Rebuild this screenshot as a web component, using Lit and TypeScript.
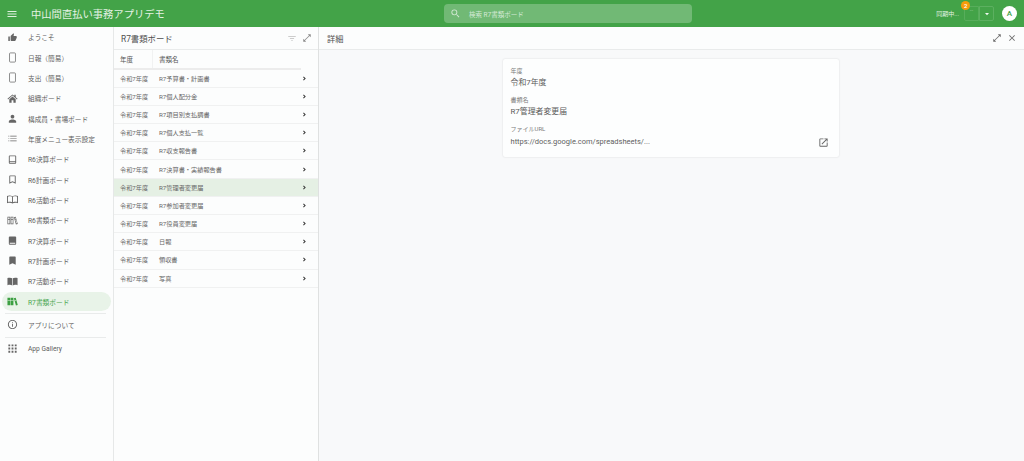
import { LitElement, html, css, svg } from "lit";
import { customElement } from "lit/decorators.js";

const I: Record<string, any> = {
  thumb: svg`<g transform="translate(2 2) scale(.84)"><path d="M1 21h4V9H1v12zm22-11c0-1.100-.9-2-2-2h-6.310l.95-4.570.03-.32c0-.41-.17-.79-.44-1.060L14.170 1 7.590 7.590C7.220 7.950 7 8.450 7 9v10c0 1.100.9 2 2 2h9c.83 0 1.540-.5 1.840-1.220l3.020-7.050c.09-.23.14-.47.14-.73v-2z"/></g>`,
  phone: svg`<rect x="5.500" y="2" width="13" height="20" rx="2" fill="none" stroke="currentColor" stroke-width="1.600"/>`,
  home: svg`<path d="M12 3 1 12.500l1.300 1.500L12 5.700 21.700 14l1.300-1.500L19 9V4h-3v2.500zM12 7.500 5 13.500V21h5v-5h4v5h5v-7.500z"/>`,
  person: svg`<path d="M12 12c2.210 0 4-1.790 4-4s-1.790-4-4-4-4 1.790-4 4 1.790 4 4 4zm0 2c-2.670 0-8 1.340-8 4v3h16v-3c0-2.660-5.330-4-8-4z"/>`,
  list: svg`<path d="M3 6h2v1.600H3zm4 0h14v1.600H7zM3 11.200h2v1.600H3zm4 0h14v1.600H7zM3 16.400h2V18H3zm4 0h14V18H7z"/>`,
  bookO: svg`<path d="M6 3h12a2 2 0 0 1 2 2v14a2 2 0 0 1-2 2H6a2 2 0 0 1-2-2V5a2 2 0 0 1 2-2zm0 2v10h12V5zm0 12v2h12v-2z"/>`,
  markO: svg`<path d="M17 3H7c-1.100 0-2 .9-2 2v16l7-3 7 3V5c0-1.100-.9-2-2-2zm0 15-5-2.180L7 18V5h10v13z"/>`,
  openO: svg`<path d="M0 4.500C3 3 9 3 12 5c3-2 9-2 12-.5V20c-3-1-9-1.500-12 .5-3-2-9-1.500-12-.5zM2 6v11.500c3-.7 6-.6 9 .6V6.200C8 4.800 5 4.800 2 6zm11 .2v11.900c3-1.200 6-1.300 9-.6V6c-3-1.200-6-1.200-9 .2z"/>`,
  libO: svg`<path d="M1 4h6v16H1zm1.500 1.500v3h3v-3zm0 5v8h3v-8zM8 4h6v16H8zm1.500 1.500v3h3v-3zm0 5v8h3v-8zM15 5l4-1 4.500 15.500-4 1.200zm1.800 1.200 .7 2.500 1.500-.4-.7-2.500zm1.300 4 2.300 8 1.500-.4-2.300-8z"/>`,
  book: svg`<path d="M6 3h12a2 2 0 0 1 2 2v14a2 2 0 0 1-2 2H6a2 2 0 0 1-2-2V5a2 2 0 0 1 2-2zm0 14v2h12v-2z"/>`,
  mark: svg`<path d="M17 3H7c-1.100 0-2 .9-2 2v16l7-3 7 3V5c0-1.100-.9-2-2-2z"/>`,
  open: svg`<path d="M1 4.500C4 3.500 9 3 11.300 5v15.500c-2.500-2-7-1.500-10.300-.5zM12.700 5c2.300-2 7.300-1.500 10.300-.5V20c-3-1-7.800-1.500-10.300.5z"/>`,
  lib: svg`<path d="M1 4h6v16H1zM8 4h6v16H8zM15 5l4-1 4.500 15.500-4 1.200z"/><path d="M1 9h13v1.400H1zM16 10.200l4-1.100.4 1.300-4 1.100z" fill="#e8f3e8"/>`,
  info: svg`<path d="M11 7h2v2h-2zm0 4h2v6h-2zm1-9C6.480 2 2 6.480 2 12s4.480 10 10 10 10-4.480 10-10S17.520 2 12 2zm0 18c-4.410 0-8-3.590-8-8s3.590-8 8-8 8 3.590 8 8-3.590 8-8 8z"/>`,
  apps: svg`<path d="M3 3h4v4H3zm7 0h4v4h-4zm7 0h4v4h-4zM3 10h4v4H3zm7 0h4v4h-4zm7 0h4v4h-4zM3 17h4v4H3zm7 0h4v4h-4zm7 0h4v4h-4z"/>`,
  menu: svg`<path d="M3 18h18v-2H3v2zm0-5h18v-2H3v2zm0-7v2h18V6H3z"/>`,
  search: svg`<path d="M15.500 14h-.79l-.28-.27A6.470 6.470 0 0 0 16 9.500 6.500 6.500 0 1 0 9.500 16c1.610 0 3.090-.59 4.230-1.570l.27.28v.79l5 4.990L20.490 19l-4.990-5zm-6 0C7.010 14 5 11.990 5 9.500S7.010 5 9.500 5 14 7.010 14 9.500 11.990 14 9.500 14z"/>`,
  filter: svg`<path d="M3 7h18v1.800H3zm4 5h10v1.800H7zm3.500 5h3v1.800h-3z"/>`,
  expand: svg`<path d="M21 3h-7l2.800 2.800L5.800 16.800 3 14v7h7l-2.800-2.800 11-11L21 10z"/>`,
  close: svg`<path d="M19 6.410 17.590 5 12 10.590 6.410 5 5 6.410 10.590 12 5 17.590 6.410 19 12 13.410 17.590 19 19 17.590 13.410 12z"/>`,
  chev: svg`<path d="M9.500 5 7 7.500l4.500 4.500L7 16.500 9.500 19l7-7z"/>`,
  ext: svg`<path d="M19 19H5V5h7V3H5a2 2 0 0 0-2 2v14a2 2 0 0 0 2 2h14a2 2 0 0 0 2-2v-7h-2v7zM14 3v2h3.590l-9.830 9.830 1.410 1.410L19 6.410V10h2V3h-7z"/>`,
  caret: svg`<path d="M6 9h12l-6 7z"/>`,
};

const ico = (n: string) => html`<svg viewBox="0 0 24 24" fill="currentColor">${I[n]}</svg>`;

const NAV: [string, string][] = [
  ["thumb", "ようこそ"], ["phone", "日報（簡易）"], ["phone", "支出（簡易）"], ["home", "組織ボード"],
  ["person", "構成員・書場ボード"], ["list", "年度メニュー表示設定"], ["bookO", "R6決算ボード"], ["markO", "R6計画ボード"],
  ["openO", "R6活動ボード"], ["libO", "R6書類ボード"], ["book", "R7決算ボード"], ["mark", "R7計画ボード"],
  ["open", "R7活動ボード"], ["lib", "R7書類ボード"],
];
const ROWS = ["R7予算書・計画書", "R7個人配分金", "R7項目別支払調書", "R7個人支払一覧", "R7収支報告書", "R7決算書・実績報告書",
  "R7管理者変更届", "R7参加者変更届", "R7役員変更届", "日報", "領収書", "写真"];

@customElement("app-root")
export class AppRoot extends LitElement {
  static styles = css`
    :host { display: block; width: 1024px; height: 461px; overflow: hidden; background: #fcfdfd; color: #5b5b5b;
      font-family: Roboto, "Noto Sans CJK JP", sans-serif; }
    svg { display: block; }
    .app { display: flex; flex-direction: column; height: 461px; }
    .top { flex: 0 0 27px; background: #43a348; color: #fff; display: flex; align-items: center; position: relative; }
    .burger { width: 12px; height: 12px; margin-left: 6px; color: #dff0df; }
    .title { margin-left: 13px; font-size: 10.300px; color: #e4f2e4; white-space: nowrap; }
    .search { position: absolute; left: 444px; top: 4px; width: 248px; height: 19px; border-radius: 4px; background: #71b975;
      display: flex; align-items: center; color: #d4e9d5; font-size: 6.500px; }
    .search svg { width: 11px; height: 11px; margin: 0 8px 0 6px; }
    .right { margin-left: auto; display: flex; align-items: center; position: relative; }
    .sync { font-size: 6px; color: #e4f2e4; margin-right: 5px; white-space: nowrap; }
    .ghost { width: 15px; height: 15px; border: 1px solid #57ad5b; border-radius: 2px 0 0 2px; box-sizing: border-box;
      color: #8fc892; font-size: 6px; line-height: 6px; text-align: center; }
    .drop { width: 15px; height: 15px; border: 1px solid #5cb060; border-radius: 0 2px 2px 0; box-sizing: border-box;
      display: flex; align-items: center; justify-content: center; margin-right: 8px; color: #f1f8f1; }
    .drop svg { width: 8px; height: 8px; }
    .badge { position: absolute; left: 25px; top: -5px; width: 9px; height: 9px; border-radius: 50%; background: #f59c0a; color: #fff;
      font-size: 6px; font-weight: 500; display: flex; align-items: center; justify-content: center; }
    .avatar { width: 15px; height: 15px; border-radius: 50%; background: #fff; color: #43a348; font-size: 8px; font-weight: 500;
      display: flex; align-items: center; justify-content: center; margin-right: 7px; }
    .body { flex: 1; display: flex; min-height: 0; }
    .nav { flex: 0 0 113px; border-right: 1px solid #e6e8e8; }
    .nitem { height: 20.350px; display: flex; align-items: center; font-size: 6.700px; color: #5e5e5e; white-space: nowrap; margin: 0 2px; border-radius: 10px; }
    .nitem svg { width: 11px; height: 11px; margin: 0 10px 0 5px; flex: none; color: #666; }
    .nitem.on { background: #e8f3e8; color: #4ba650; height: 19px; margin-top: 1px; }
    .nitem.on svg { color: #3c9f42; }
    .sep { height: 1px; background: #e9ebeb; margin: 2px 7px 0 5px; }
    .nitem.low { height: 21px; }
    .list { flex: 0 0 204px; border-right: 1px solid #dfe1e1; display: flex; flex-direction: column; }
    .phead { height: 23px; flex: none; border-bottom: 1px solid #e9ebeb; box-sizing: border-box; display: flex; align-items: center;
      font-size: 8.400px; color: #4f4f4f; padding: 0 6px 0 7px; }
    .phead .acts { margin-left: auto; display: flex; gap: 5px; color: #8a8a8a; align-items: center; }
    .phead svg { width: 10px; height: 10px; }
    .gray { color: #bcbcbc; }
    .colh, .row { display: grid; grid-template-columns: 39px 1fr 20px; align-items: center; }
    .colh { height: 19.500px; flex: none; font-size: 6.500px; color: #555; border-bottom: 2px solid #ececec; box-sizing: border-box; margin-right: 17px; grid-template-columns: 39px 1fr; }
    .colh span:first-child { padding-left: 6px; border-right: 1px solid #f1f2f2; height: 100%; display: flex; align-items: center; }
    .colh span:last-child { padding-left: 6px; }
    .row { height: 18.200px; flex: none; box-sizing: border-box; font-size: 6.200px; color: #666; border-bottom: 1.500px solid #f0f1f1; }
    .row span:first-child { padding-left: 6px; }
    .row span:nth-child(2) { padding-left: 6px; white-space: nowrap; }
    .row svg { width: 7px; height: 7px; color: #3c3c3c; margin-left: 2.500px; }
    .row.on { background: #e5f0e4; }
    .detail { flex: 1; background: #f8f9fa; display: flex; flex-direction: column; min-width: 0; }
    .dhead { height: 23px; flex: none; background: #fcfdfd; border-bottom: 1px solid #e9ebeb; box-sizing: border-box; display: flex; align-items: center;
      font-size: 8.200px; color: #4f4f4f; padding: 0 7px 0 8px; }
    .dhead .acts { margin-left: auto; display: flex; gap: 5px; color: #6c6c6c; }
    .dhead svg { width: 10px; height: 10px; }
    .wrap { display: flex; justify-content: center; padding-top: 9px; padding-right: 2px; }
    .card { width: 336px; height: 98px; box-sizing: border-box; background: #fdfefe; border-radius: 2px; box-shadow: 0 0 2px rgba(0,0,0,.14); padding: 8px; }
    .lab { font-size: 6px; color: #7c7c7c; line-height: 8px; }
    .val { font-size: 7.900px; color: #5a5a5a; line-height: 12px; margin: 2px 0 7px; white-space: nowrap; }
    .url { display: flex; align-items: center; justify-content: space-between; margin: 3px 0 0; font-size: 7.500px; color: #5f5f5f; }
    .url svg { width: 11px; height: 11px; color: #666; margin-right: 2px; }
  `;

  render() {
    return html`<div class="app">
      <div class="top">
        <div class="burger">${ico("menu")}</div>
        <div class="title">中山間直払い事務アプリデモ</div>
        <div class="search">${ico("search")}<span>検索 R7書類ボード</span></div>
        <div class="right">
          <span class="sync">同期中...</span>
          <span class="badge">2</span>
          <div class="ghost">--</div>
          <div class="drop">${ico("caret")}</div>
          <div class="avatar">A</div>
        </div>
      </div>
      <div class="body">
        <div class="nav">
          ${NAV.map(([i, t], n) => html`<div class="nitem ${n === 13 ? "on" : ""}">${ico(i)}<span>${t}</span></div>`)}
          <div class="sep"></div>
          <div class="nitem low">${ico("info")}<span>アプリについて</span></div>
          <div class="sep"></div>
          <div class="nitem low">${ico("apps")}<span>App Gallery</span></div>
        </div>
        <div class="list">
          <div class="phead"><span>R7書類ボード</span><div class="acts"><span class="gray">${ico("filter")}</span>${ico("expand")}</div></div>
          <div class="colh"><span>年度</span><span>書類名</span></div>
          ${ROWS.map((r, n) => html`<div class="row ${n === 6 ? "on" : ""}"><span>令和7年度</span><span>${r}</span>${ico("chev")}</div>`)}
        </div>
        <div class="detail">
          <div class="dhead"><span>詳細</span><div class="acts">${ico("expand")}${ico("close")}</div></div>
          <div class="wrap">
            <div class="card">
              <div class="lab">年度</div>
              <div class="val">令和7年度</div>
              <div class="lab">書類名</div>
              <div class="val">R7管理者変更届</div>
              <div class="lab">ファイルURL</div>
              <div class="val url"><span>https://docs.google.com/spreadsheets/...</span>${ico("ext")}</div>
            </div>
          </div>
        </div>
      </div>
    </div>`;
  }
}
